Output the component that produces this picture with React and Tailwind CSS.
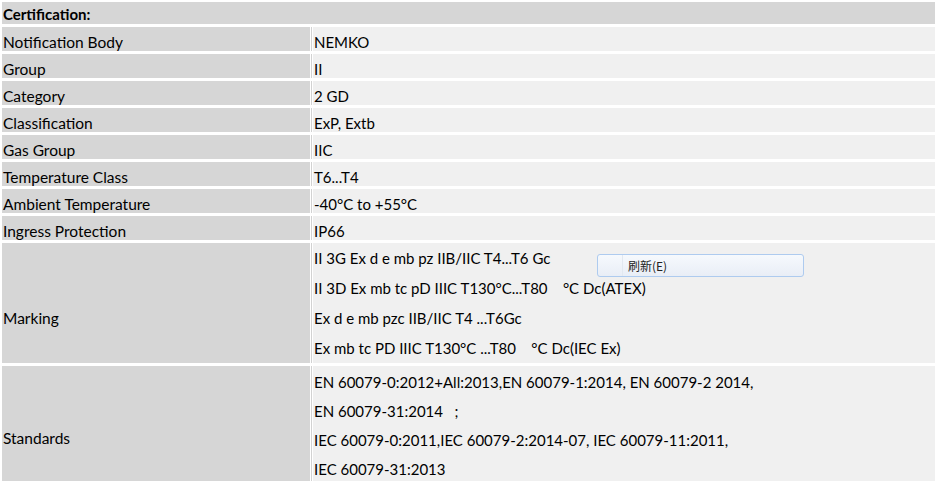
import React from "react";

const font = { fontFamily: "Lato, 'Noto Sans CJK SC', sans-serif" };

const simpleRows = [
  ["Notification Body", "NEMKO"],
  ["Group", "II"],
  ["Category", "2 GD"],
  ["Classification", "ExP, Extb"],
  ["Gas Group", "IIC"],
  ["Temperature Class", "T6...T4"],
  ["Ambient Temperature", "-40°C to +55°C"],
  ["Ingress Protection", "IP66"],
];

const marking = [
  "II 3G Ex d e mb pz IIB/IIC T4...T6 Gc",
  "II 3D Ex mb tc pD IIIC T130°C...T80\u00a0\u00a0\u00a0\u00a0°C Dc(ATEX)",
  "Ex d e mb pzc IIB/IIC T4 ...T6Gc",
  "Ex mb tc PD IIIC T130°C ...T80\u00a0\u00a0\u00a0\u00a0°C Dc(IEC Ex)",
];

const standards = [
  "EN 60079-0:2012+All:2013,EN 60079-1:2014, EN 60079-2 2014,",
  "EN 60079-31:2014\u00a0\u00a0\u00a0;",
  "IEC 60079-0:2011,IEC 60079-2:2014-07, IEC 60079-11:2011,",
  "IEC 60079-31:2013",
];

function Row({ label, children, h, labelPad }) {
  return (
    <div className="flex" style={{ height: h }}>
      <div
        className="w-[308px] shrink-0 bg-[#d6d6d6] pl-[1px]"
        style={{ paddingTop: labelPad }}
      >
        <div className="leading-[24px] text-[15.5px]">{label}</div>
      </div>
      <div className="w-[1px] bg-white" />
      <div className="w-[1px] bg-[#d2d2d2]" />
      <div className="w-[1px] bg-white" />
      <div className="flex-1 bg-[#f0f0f0] pl-[1px]">{children}</div>
    </div>
  );
}

export default function App() {
  return (
    <div
      className="relative w-[941px] h-[481px] overflow-hidden bg-white text-[15px] text-black"
      style={font}
    >
      <div className="ml-[2px] w-[933px] pt-[2px] flex flex-col gap-[3px]">
        <div className="h-[22px] bg-[#d6d6d6] pl-[1px] font-bold leading-[22px] pt-[1px] text-[15px]">
          Certification:
        </div>
        {simpleRows.map(([l, v]) => (
          <Row key={l} label={l} h="24px" labelPad="3px">
            <div className="leading-[24px] pt-[3px]">{v}</div>
          </Row>
        ))}
        <Row label="Marking" h="120px" labelPad="63px">
          {marking.map((t) => (
            <div key={t} className="leading-[30px] whitespace-pre">
              {t}
            </div>
          ))}
        </Row>
        <Row label="Standards" h="140px" labelPad="60px">
          <div className="pt-[2px]">
            {standards.map((t) => (
              <div key={t} className="leading-[29px] whitespace-pre">
                {t}
              </div>
            ))}
          </div>
        </Row>
      </div>

      <div className="absolute left-[597px] top-[254px] w-[207px] h-[23px] rounded-[3px] border border-[#aecbef] bg-gradient-to-b from-[#f6f9fd] to-[#e9eef6] flex">
        <div className="w-[25px] border-r border-[#e2e8f0]" />
        <div
          className="pl-[5px] text-[12px] leading-[21px] text-[#222]"
          style={{ fontFamily: "'Noto Sans CJK SC', 'Liberation Sans', sans-serif" }}
        >
          刷新(E)
        </div>
      </div>
    </div>
  );
}
